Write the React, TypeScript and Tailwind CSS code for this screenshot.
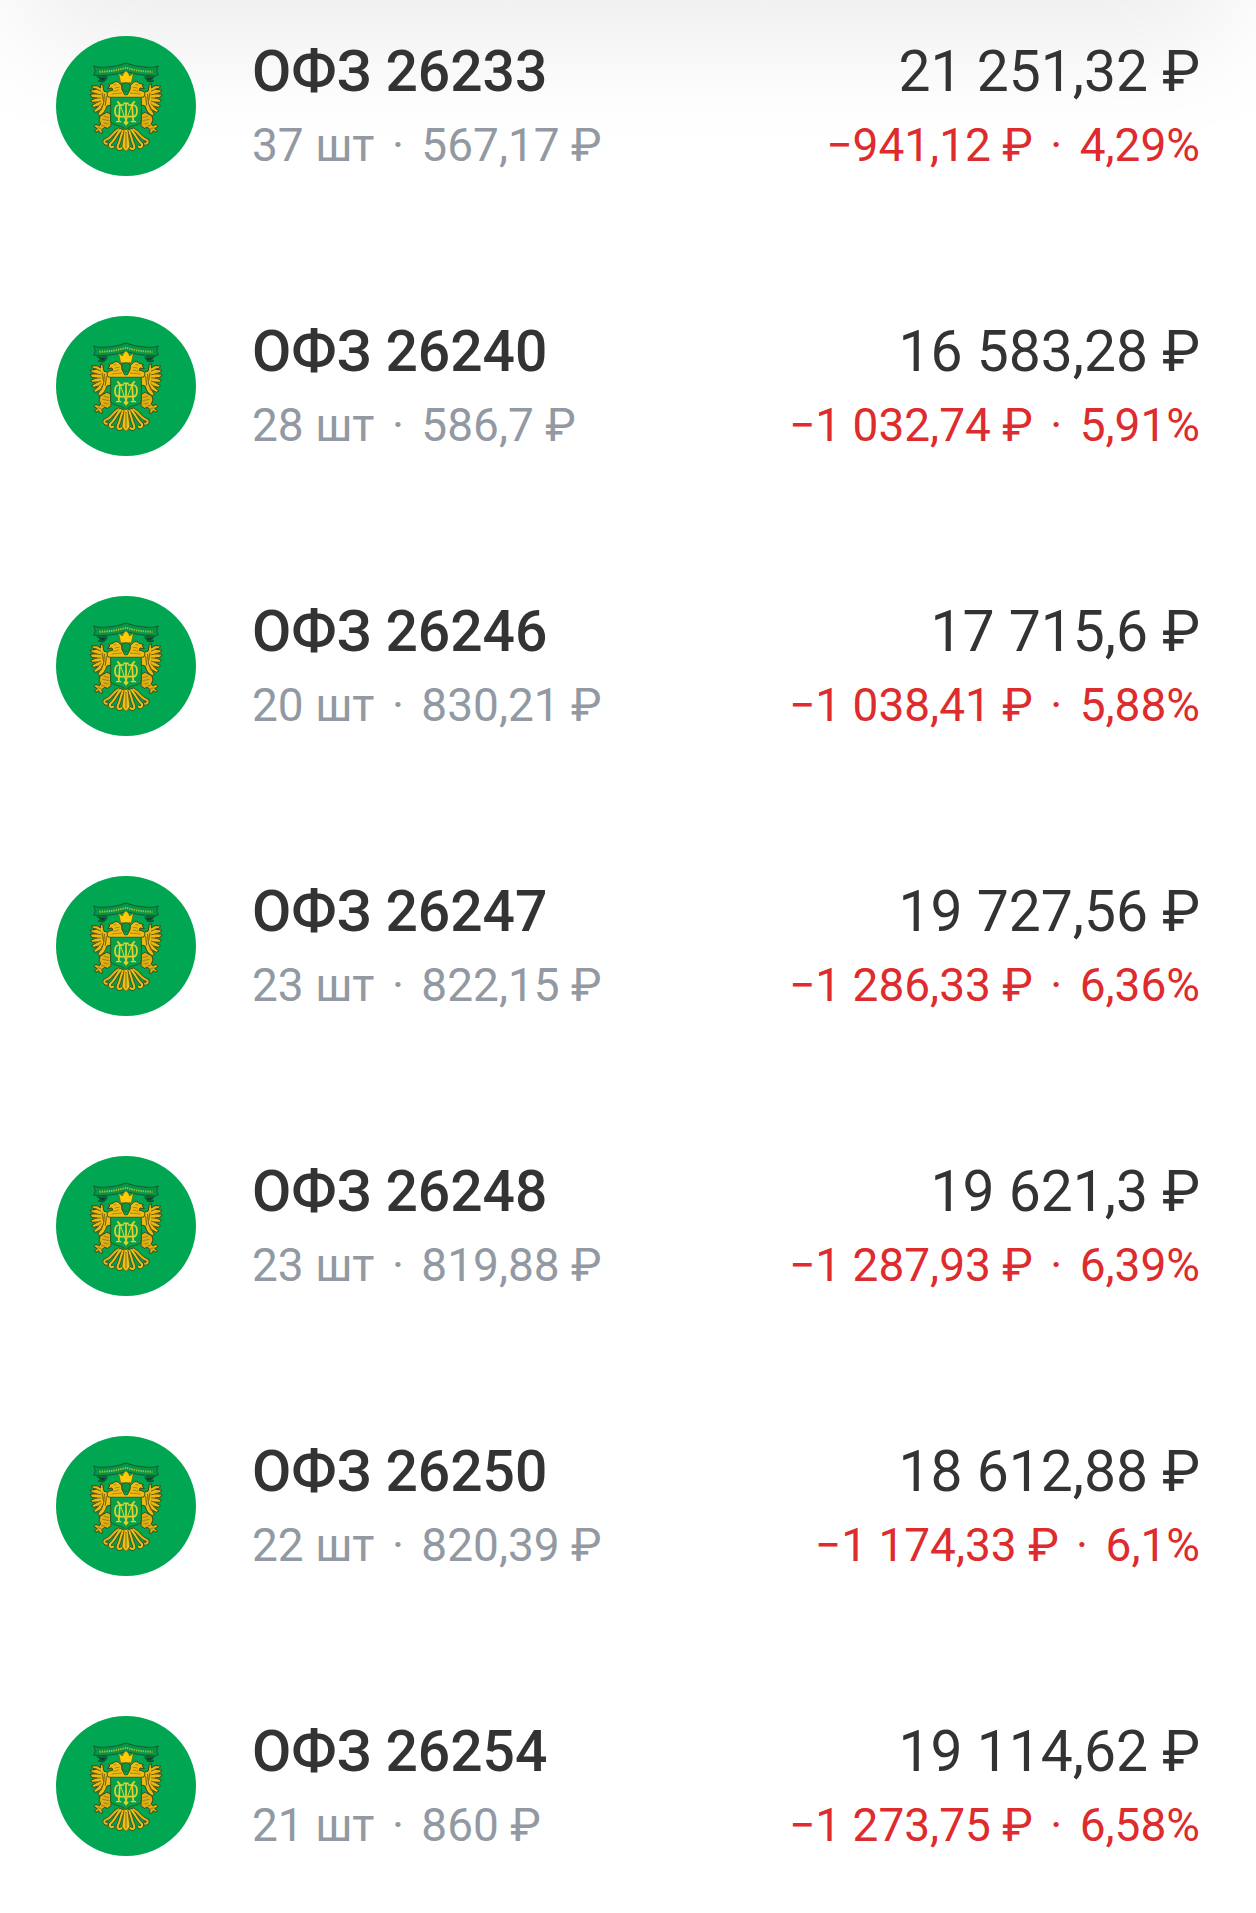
import React from 'react';

interface Bond {
  name: string;
  count: number;
  price: string;
  total: string;
  change: string;
  percent: string;
}

const bonds: Bond[] = [
  { name: 'ОФЗ 26233', count: 37, price: '567,17', total: '21 251,32', change: '−941,12', percent: '4,29%' },
  { name: 'ОФЗ 26240', count: 28, price: '586,7', total: '16 583,28', change: '−1 032,74', percent: '5,91%' },
  { name: 'ОФЗ 26246', count: 20, price: '830,21', total: '17 715,6', change: '−1 038,41', percent: '5,88%' },
  { name: 'ОФЗ 26247', count: 23, price: '822,15', total: '19 727,56', change: '−1 286,33', percent: '6,36%' },
  { name: 'ОФЗ 26248', count: 23, price: '819,88', total: '19 621,3', change: '−1 287,93', percent: '6,39%' },
  { name: 'ОФЗ 26250', count: 22, price: '820,39', total: '18 612,88', change: '−1 174,33', percent: '6,1%' },
  { name: 'ОФЗ 26254', count: 21, price: '860', total: '19 114,62', change: '−1 273,75', percent: '6,58%' },
];

// Left half of the eagle, the right half is the same group mirrored
const EmblemHalf: React.FC = () => (
  <g strokeLinejoin="round" strokeLinecap="round">
    {/* ribbon fold */}
    <path d="M170 164l22 4 10 4-7 10-8 4-12-3 7-6-8-5z" fill="#07753c" stroke="#124d2b" strokeWidth="3" />
    <path d="M180 174l14 2M184 180l8-1" stroke="#0b3521" strokeWidth="3" fill="none" />
    {/* wing */}
    <path
      d="M216 222c-10-2-17-8-24-8l-4-20-7-2 1 12-11-7-17 1 5 7 12 3-20 2 5 8 15 3-21 2 5 9 16 2-19 6 5 7 16-1-19 11 7 5 15-4-16 15 7 4 14-8-8 14 6 4c8-3 14-10 18-19l4-10 14-4z"
      fill="#ecb812"
      stroke="#3f4718"
      strokeWidth="3"
    />
    <path
      d="M165 206l17 7M161 220l20 4M160 235l21-1M163 250l19-7M167 266l16-15M178 276l10-21M186 219l4 22M193 223l-2 26-7 20M199 230l-3 26"
      fill="none"
      stroke="#6f6012"
      strokeWidth="3"
    />
    {/* shoulder, neck and head */}
    <path
      d="M204 230c-5-7-3-14 5-17l9-2-2-7-13 2 6-8-3-5 13-3c3-6 14-7 19-1l7 8 1 12 7 13 5 8z"
      fill="#f0bc12"
      stroke="#3f4718"
      strokeWidth="3"
    />
    <path d="M222 195l6-1M225 204l12-2M221 214l16-4M215 222l30-3" fill="none" stroke="#806c12" strokeWidth="2" />
    {/* leg and claw */}
    <path
      d="M187 284l13-7 12 5 1 35-10 8-10-3-8 8 4 8-8 2-5-8-8 5-4-6 8-5-10-6 5-7 11 4 4-5-5-12 3-11z"
      fill="#dfae16"
      stroke="#3f4718"
      strokeWidth="3"
    />
    <path d="M192 288l14 5M188 298l19 4M192 309l13 3M184 316l10 2M174 323l10 3" fill="none" stroke="#806c12" strokeWidth="2" />
    {/* tail feathers */}
    <g fill="none">
      <path d="M236 328c-16 8-22 26-38 31-8 3-6 14 3 12" stroke="#3f5018" strokeWidth="11" />
      <path d="M242 330c-12 12-17 30-29 39-7 6-2 16 7 11" stroke="#3f5018" strokeWidth="11" />
      <path d="M249 332c-7 16-9 33-15 44-4 9 4 15 11 8" stroke="#3f5018" strokeWidth="11" />
      <path d="M236 328c-16 8-22 26-38 31-8 3-6 14 3 12" stroke="#e0b41a" strokeWidth="6" />
      <path d="M242 330c-12 12-17 30-29 39-7 6-2 16 7 11" stroke="#ecc024" strokeWidth="6" />
      <path d="M249 332c-7 16-9 33-15 44-4 9 4 15 11 8" stroke="#ecbc18" strokeWidth="6" />
    </g>
  </g>
);

const BondLogo: React.FC = () => (
  <svg viewBox="48 48 420 420" className="size-[140px] shrink-0" aria-hidden="true">
    <circle cx="258" cy="258" r="210" fill="#00a651" />
    <EmblemHalf />
    <g transform="translate(516 0) scale(-1 1)">
      <EmblemHalf />
    </g>
    {/* middle tail feather */}
    <path d="M253 325h10l7 54-5 8-7 7-7-7-5-8z" fill="#f0c01a" stroke="#4b4c16" strokeWidth="2" strokeLinejoin="round" />
    <path d="M258 335v50" fill="none" stroke="#806c10" strokeWidth="3" />
    {/* ribbon */}
    <path
      d="M161 138l16 4c29 0 55-3 81-13 26 10 52 13 81 13l16-4-5 14 5 13-16 2c-31 0-56-5-81-12-25 7-50 12-81 12l-16-2 5-13z"
      fill="#079348"
      stroke="#125c33"
      strokeWidth="3"
      strokeLinejoin="round"
    />
    <path d="M178 155c29 0 55-4 80-12 25 8 51 12 80 12" fill="none" stroke="#9cc635" strokeWidth="6" strokeDasharray="4 3" />
    {/* crown */}
    <path d="M242 188l-6-28 11 8 4-9 7-7 7 7 4 9 11-8-6 28z" fill="#ffcb08" stroke="#6f6315" strokeWidth="2" strokeLinejoin="round" />
    {/* small shield between the heads */}
    <path d="M247 192l11-3 11 3 1 11c-2 6-6 9-12 13-6-4-10-7-12-13z" fill="#079b49" stroke="#41601b" strokeWidth="3" />
    {/* main shield */}
    <path d="M212 231h92v69c0 11-11 14-23 17-10 2-17 6-23 12-6-6-13-10-23-12-12-3-23-6-23-17z" fill="#08a04d" stroke="#2c5a20" strokeWidth="3" />
    <path d="M209 228h98" stroke="#efbd19" strokeWidth="4" />
    {/* monogram */}
    <g fill="none" stroke="#e6d22e" strokeWidth="5">
      <path d="M258 249v64M250 250h16M252 305l6 8 6-8" />
      <path d="M252 255h-14c-9 0-13 8-13 17s4 18 13 18h14M264 255h14c9 0 13 8 13 17s-4 18-13 18h-14" />
      <path d="M232 244l8 9-4 51M284 244l-8 9 4 51" strokeWidth="5" />
      <path d="M240 253l18 50 18-50" strokeWidth="3" />
      <path d="M228 305h16M272 305h16" strokeWidth="4" />
    </g>
  </svg>
);

const Dot: React.FC = () => <span className="mx-1.5">·</span>;

const BondRow: React.FC<{ bond: Bond }> = ({ bond }) => (
  <li className="flex h-[140px] items-start">
    <BondLogo />
    <div className="ml-14 flex flex-1 justify-between whitespace-nowrap">
      <div>
        <h2 className="text-[57px] leading-[72px] font-medium text-[#333333]">{bond.name}</h2>
        <p className="text-[46px] leading-[74px] text-[#9299a2]">
          {bond.count} шт <Dot /> {bond.price} ₽
        </p>
      </div>
      <div className="text-right">
        <p className="text-[57px] leading-[72px] text-[#333333]">{bond.total} ₽</p>
        <p className="text-[46px] leading-[74px] text-[#dd2b2e]">
          {bond.change} ₽ <Dot /> {bond.percent}
        </p>
      </div>
    </div>
  </li>
);

const App: React.FC = () => {
  return (
    <main className="relative min-h-screen bg-white font-['Roboto','Noto_Sans',sans-serif]">
      {/* shadow of the panel above the list */}
      <div className="pointer-events-none absolute inset-x-6 -top-52 h-52 shadow-[0_40px_120px_rgba(0,0,0,0.08)]" />
      <ul className="relative flex flex-col gap-[140px] px-14 pt-9 pb-14">
        {bonds.map(bond => (
          <BondRow key={bond.name} bond={bond} />
        ))}
      </ul>
    </main>
  );
};

export default App;
